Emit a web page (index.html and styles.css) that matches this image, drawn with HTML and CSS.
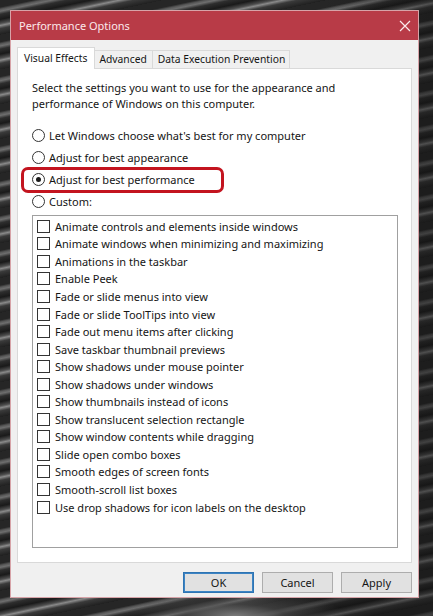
FILE: index.html
```html
<!DOCTYPE html>
<html>
<head>
<meta charset="utf-8">
<title>Performance Options</title>
<link rel="stylesheet" href="styles.css">
</head>
<body>
<div class="window">
  <div class="titlebar">
    <span class="title">Performance Options</span>
    <svg class="close" width="12" height="12" viewBox="0 0 12 12"><path d="M1 1 L11 11 M11 1 L1 11" stroke="#fbeaec" stroke-width="1.2" fill="none"/></svg>
  </div>
  <div class="content">
    <div class="tabs">
      <div class="tab active">Visual Effects</div>
      <div class="tab adv">Advanced</div>
      <div class="tab dep">Data Execution Prevention</div>
    </div>
    <div class="panel">
      <p class="desc">Select the settings you want to use for the appearance and<br>performance of Windows on this computer.</p>
      <div class="radios">
        <div class="radio-row"><span class="radio"></span><span>Let Windows choose what's best for my computer</span></div>
        <div class="radio-row"><span class="radio"></span><span>Adjust for best appearance</span></div>
        <div class="radio-row highlighted"><span class="radio checked"></span><span>Adjust for best performance</span><span class="mark"></span></div>
        <div class="radio-row"><span class="radio"></span><span>Custom:</span></div>
      </div>
      <div class="listbox">
        <div class="check-row"><span class="check"></span><span>Animate controls and elements inside windows</span></div>
        <div class="check-row"><span class="check"></span><span>Animate windows when minimizing and maximizing</span></div>
        <div class="check-row"><span class="check"></span><span>Animations in the taskbar</span></div>
        <div class="check-row"><span class="check"></span><span>Enable Peek</span></div>
        <div class="check-row"><span class="check"></span><span>Fade or slide menus into view</span></div>
        <div class="check-row"><span class="check"></span><span>Fade or slide ToolTips into view</span></div>
        <div class="check-row"><span class="check"></span><span>Fade out menu items after clicking</span></div>
        <div class="check-row"><span class="check"></span><span>Save taskbar thumbnail previews</span></div>
        <div class="check-row"><span class="check"></span><span>Show shadows under mouse pointer</span></div>
        <div class="check-row"><span class="check"></span><span>Show shadows under windows</span></div>
        <div class="check-row"><span class="check"></span><span>Show thumbnails instead of icons</span></div>
        <div class="check-row"><span class="check"></span><span>Show translucent selection rectangle</span></div>
        <div class="check-row"><span class="check"></span><span>Show window contents while dragging</span></div>
        <div class="check-row"><span class="check"></span><span>Slide open combo boxes</span></div>
        <div class="check-row"><span class="check"></span><span>Smooth edges of screen fonts</span></div>
        <div class="check-row"><span class="check"></span><span>Smooth-scroll list boxes</span></div>
        <div class="check-row"><span class="check"></span><span>Use drop shadows for icon labels on the desktop</span></div>
      </div>
    </div>
    <div class="buttons">
      <div class="btn default">OK</div>
      <div class="btn">Cancel</div>
      <div class="btn">Apply</div>
    </div>
  </div>
</div>
</body>
</html>
```

FILE: styles.css
```css
html, body {
  margin: 0;
  padding: 0;
}
body {
  width: 433px;
  height: 616px;
  overflow: hidden;
  font-family: "Noto Sans", "Open Sans", sans-serif;
  font-size: 11px;
  color: #151515;
  background:
    radial-gradient(ellipse 110px 26px at 235px 616px, #7a7a7a 0%, rgba(70,70,70,0.7) 45%, rgba(0,0,0,0) 100%),
    linear-gradient(100deg, rgba(0,0,0,0) 0 60%, rgba(20,20,20,0.5) 80%),
    repeating-linear-gradient(168deg, #262626 0 7px, #575757 9px, #6e6e6e 11px, #2e2e2e 14px, #1a1a1a 19px, #4d4d4d 23px, #8a8a8a 25px, #3a3a3a 28px, #202020 34px);
}
.window {
  margin: 10px 0 0 10px;
  width: 407px;
  height: 586px;
  border: 1px solid #d7a3a8;
  background: #f0f0f0;
  display: flex;
  flex-direction: column;
}
.titlebar {
  height: 29px;
  background: #b83b47;
  display: flex;
  align-items: center;
  justify-content: space-between;
  padding: 0 7px 0 8px;
}
.title {
  color: #fbe9eb;
  font-size: 11px;
}
.close {
  display: block;
}
.content {
  flex: 1;
  display: flex;
  flex-direction: column;
  padding: 7px 6px 0 6px;
}
.tabs {
  display: flex;
  align-items: flex-end;
  height: 21px;
  position: relative;
  z-index: 1;
  font-size: 10.3px;
}
.tab {
  height: 17px;
  line-height: 17px;
  border: 1px solid #d9d9d9;
  border-bottom: none;
  border-left: none;
  background: #f0f0f0;
}
.tab.active {
  height: 21px;
  line-height: 20px;
  background: #fff;
  border-left: 1px solid #d9d9d9;
  padding: 0 7px 0 6px;
  margin-bottom: -1px;
}
.tab.adv {
  padding: 0 5px 0 4px;
}
.tab.dep {
  padding: 0 4px 0 5px;
}
.panel {
  height: 493px;
  border: 1px solid #d9d9d9;
  background: #fff;
  padding: 0 12px 0 14px;
  display: flex;
  flex-direction: column;
}
.desc {
  margin: 11px 0 0 0;
  line-height: 16px;
}
.radios {
  margin-top: 12px;
  display: flex;
  flex-direction: column;
}
.radio-row {
  height: 22px;
  display: flex;
  align-items: center;
  gap: 4px;
  position: relative;
}
.radio {
  width: 11px;
  height: 11px;
  border: 1px solid #333;
  border-radius: 50%;
  background: #fff;
  position: relative;
  flex: none;
}
.radio.checked::after {
  content: "";
  position: absolute;
  left: 3px;
  top: 3px;
  width: 5px;
  height: 5px;
  border-radius: 50%;
  background: #1a1a1a;
}
.mark {
  position: absolute;
  left: -11px;
  top: -1px;
  width: 197px;
  height: 20px;
  border: 3px solid #c3141f;
  border-radius: 7px;
}
.listbox {
  margin-top: 3px;
  width: 364px;
  height: 329px;
  border: 1px solid #a0a0a0;
  padding-top: 1.5px;
  box-sizing: content-box;
}
.check-row {
  height: 17.55px;
  display: flex;
  align-items: center;
  padding-left: 4px;
  gap: 5px;
  white-space: nowrap;
}
.check {
  width: 11px;
  height: 11px;
  border: 1px solid #333;
  background: #fff;
  flex: none;
}
.buttons {
  display: flex;
  justify-content: flex-end;
  gap: 8px;
  padding-top: 9px;
}
.btn {
  width: 69px;
  height: 19px;
  line-height: 19px;
  text-align: center;
  background: #e1e1e1;
  border: 1px solid #adadad;
}
.btn.default {
  border: 1px solid #2f74b2;
  box-shadow: inset 0 0 0 1px #3c84c4;
}
```
